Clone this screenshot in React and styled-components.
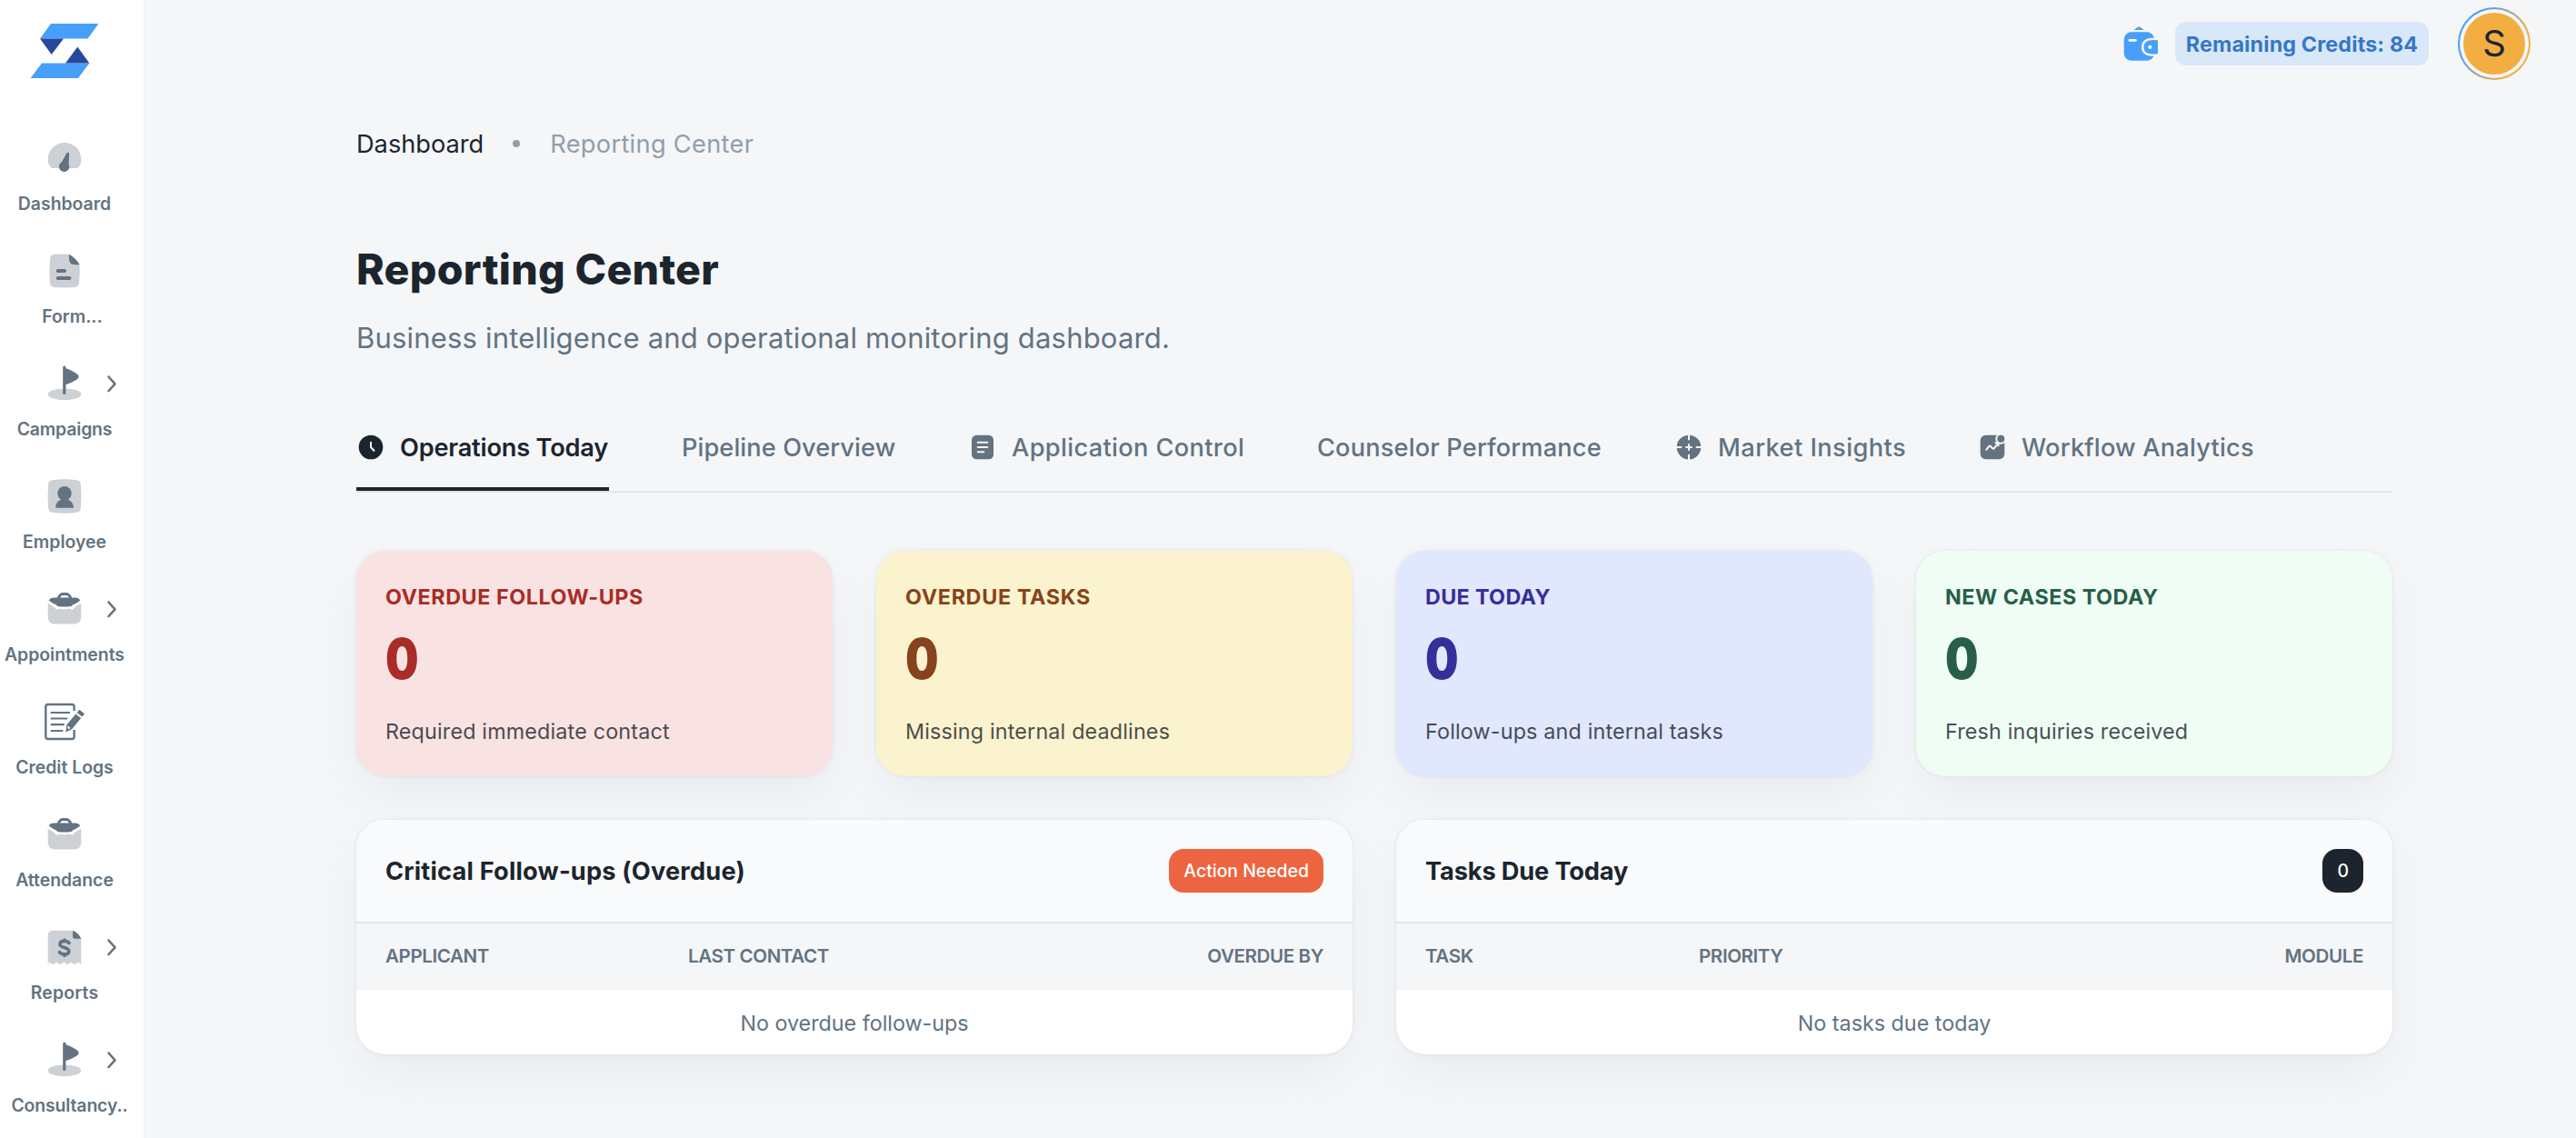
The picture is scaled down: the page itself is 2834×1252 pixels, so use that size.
import React from "react";
import styled, { createGlobalStyle } from "styled-components";

const GlobalStyle = createGlobalStyle`
  * {
    box-sizing: border-box;
  }
  body {
    margin: 0;
    background: #f4f6f8;
    color: #1c252e;
    font-family: Inter, "Open Sans", sans-serif;
    -webkit-font-smoothing: antialiased;
  }
  svg {
    display: block;
    flex: none;
  }
`;

const Page = styled.div`
  display: flex;
  height: 1252px;
  overflow: hidden;
`;

/* ---------- sidebar ---------- */

const Sidebar = styled.aside`
  flex: none;
  width: 160px;
  height: 100%;
  overflow: hidden;
  background: #fff;
  border-right: 2px solid #f1f3f5;
`;

const LogoWrap = styled.div`
  height: 132px;
  padding: 26px 0 0 33px;
`;

const Nav = styled.nav`
  width: 142px;
`;

const NavItem = styled.div`
  height: 124px;
  padding-top: 20px;
`;

const NavIconRow = styled.div`
  display: grid;
  grid-template-columns: 1fr 44px 1fr;
  align-items: center;
  height: 44px;
  > svg:last-child:not(:first-child) {
    margin-left: 14px;
  }
  > svg:first-child {
    grid-column: 2;
  }
`;

const NavLabel = styled.div`
  display: flex;
  justify-content: center;
  margin-top: 16px;
  padding-left: ${p => p.$indent || 0}px;
  white-space: nowrap;
  font-size: 19.4px;
  line-height: 24px;
  font-weight: 600;
  letter-spacing: ${p => p.$ls || 0}px;
  color: #637381;
`;

/* ---------- top bar ---------- */

const Main = styled.main`
  flex: 1;
  min-width: 0;
`;

const TopBar = styled.header`
  display: flex;
  align-items: center;
  justify-content: flex-end;
  height: 96px;
  padding-right: 50px;
`;

const Credits = styled.div`
  display: flex;
  align-items: center;
  justify-content: center;
  width: 279px;
  height: 48px;
  margin: 0 32px 0 16px;
  border-radius: 12px;
  background: #d9e8f8;
  color: #3577c8;
  font-size: 23.3px;
  font-weight: 700;
  letter-spacing: 0.15px;
  white-space: nowrap;
`;

const AvatarRing = styled.div`
  width: 80px;
  height: 80px;
  padding: 2px;
  border-radius: 50%;
  background: linear-gradient(120deg, #489ffa 22%, #f2ae40 76%);
`;

const AvatarGap = styled.div`
  width: 76px;
  height: 76px;
  padding: 4px;
  border-radius: 50%;
  background: #f4f6f8;
`;

const Avatar = styled.div`
  display: flex;
  align-items: center;
  justify-content: center;
  width: 68px;
  height: 68px;
  border-radius: 50%;
  background: #f2ae40;
  font-size: 40px;
  line-height: 68px;
`;

/* ---------- page head ---------- */

const Container = styled.div`
  width: 2240px;
  margin-left: 232px;
  padding-top: 40px;
`;

const Breadcrumbs = styled.div`
  display: flex;
  align-items: center;
  height: 44px;
  font-size: 27.2px;
`;

const Crumb = styled.span`
  color: ${p => (p.$current ? "#919eab" : "#1c252e")};
  letter-spacing: ${p => (p.$current ? 0.32 : 0)}px;
`;

const CrumbDot = styled.i`
  width: 8px;
  height: 8px;
  margin: 0 33px 0 32px;
  border-radius: 50%;
  background: #919eab;
`;

const Title = styled.h1`
  margin: 80px 0 0;
  font-size: 46.5px;
  line-height: 72px;
  font-weight: 800;
  letter-spacing: 0.3px;
`;

const Subtitle = styled.p`
  margin: 16px 0 0;
  font-size: 31px;
  line-height: 48px;
  letter-spacing: 0.19px;
  color: #637381;
`;

const Tabs = styled.div`
  display: flex;
  gap: 80px;
  margin-top: 48px;
  border-bottom: 2px solid #e1e4e7;
`;

const Tab = styled.div`
  display: flex;
  align-items: center;
  gap: 16px;
  width: ${p => p.$width}px;
  height: 96px;
  font-size: 27.2px;
  font-weight: ${p => (p.$active ? 600 : 500)};
  letter-spacing: ${p => p.$ls}px;
  white-space: nowrap;
  color: ${p => (p.$active ? "#1c252e" : "#637381")};
  box-shadow: ${p => (p.$active ? "inset 0 -4px 0 #1c252e" : "none")};
`;

/* ---------- cards ---------- */

const shadow = `
  box-shadow: 0 0 4px rgba(145, 158, 171, .2), 0 24px 48px -8px rgba(145, 158, 171, .12);
`;

const StatGrid = styled.div`
  display: grid;
  grid-template-columns: repeat(4, 1fr);
  gap: 48px;
  margin-top: 64px;
`;

const StatCard = styled.section`
  height: 248px;
  padding: 33px 32px 0;
  border-radius: 32px;
  background: ${p => p.$bg};
  color: ${p => p.$color};
  ${shadow}
`;

const StatTitle = styled.div`
  font-size: 23.3px;
  line-height: 36px;
  font-weight: 700;
  letter-spacing: ${p => p.$ls}px;
`;

const StatValue = styled.div`
  margin: 2px 0 14px;
  font-size: 62px;
  line-height: 96px;
  font-weight: 900;
  transform: scaleX(0.83);
  transform-origin: left;
`;

const StatNote = styled.div`
  font-size: 23.3px;
  line-height: 36px;
  letter-spacing: 0.18px;
  color: #1c252e;
  opacity: 0.8;
`;

const PanelGrid = styled.div`
  display: grid;
  grid-template-columns: 1fr 1fr;
  gap: 48px;
  margin-top: 48px;
`;

const Panel = styled.section`
  overflow: hidden;
  border-radius: 32px;
  background: #fff;
  ${shadow}
`;

const PanelHead = styled.div`
  display: flex;
  align-items: center;
  justify-content: space-between;
  height: 114px;
  padding: 0 32px;
  border-bottom: 2px solid #dfe6ec;
  background: #f9fafc;
`;

const PanelTitle = styled.h2`
  margin: 0;
  font-size: 27.2px;
  font-weight: 700;
  letter-spacing: ${p => p.$ls}px;
`;

const Badge = styled.span`
  height: 48px;
  padding: 0 16px;
  border-radius: 16px;
  background: ${p => p.$bg};
  color: #fff;
  font-size: 19.4px;
  line-height: 48px;
  font-weight: 500;
`;

const HeadRow = styled.div`
  display: grid;
  grid-template-columns: ${p => p.$first}px 1fr auto;
  padding: 0 32px;
  height: 73px;
  background: #f4f6f8;
  color: #637381;
  font-size: 20.6px;
  line-height: 72px;
  font-weight: 600;
  letter-spacing: -0.42px;
`;

const Empty = styled.div`
  height: 71px;
  font-size: 23.3px;
  line-height: 73px;
  text-align: center;
  color: #637381;
`;

/* ---------- icons ---------- */

const DARK = "#637381";
const LIGHT = "#cdd1d6";

const Logo = () => (
  <svg width="76" height="60" viewBox="0 0 76 60">
    <path fill="#489ffa" d="M23 0h52.5l-12 16.5H11zM13 43.5h52.3L53 60H.5z" />
    <path fill="#28489d" d="M11 16.5h26L23.7 34zM39 43.5h26.3L52.3 25.5z" />
  </svg>
);

const DashboardIcon = () => (
  <svg width="44" height="44">
    <path fill={LIGHT} d="M9 33C5.500 33 3.700 28 3.700 23.300a18.300 18.300 0 0 1 36.600 0C40.300 28 38.500 33 35 33z" />
    <path fill={DARK} d="M24.200 16.700c.6-1.400 2.900-1 2.900.6l-.5 11.200a5.700 5.700 0 1 1-7.700-2.200z" />
  </svg>
);

const FormIcon = () => (
  <svg width="44" height="44">
    <path fill={LIGHT} d="M11 3.800Q19 3 27 3.800L38.500 15.200Q39.200 26 38 35q-.5 4.500-4.500 5-11.500.8-23 0-4-.5-4.500-4.500-1.300-13.500 0-27 .5-4.200 5-4.700z" />
    <path fill={DARK} d="M27 3.800c-.3 3.500-.2 6.500 1 9 .8 2.200 3.500 2.700 10.600 2.400C36 10.500 32 6.500 27 3.800z" />
    <path stroke={DARK} strokeWidth="3.800" strokeLinecap="round" d="M14.700 22h7.400M14.700 30h12.800" />
  </svg>
);

const FlagIcon = () => (
  <svg width="44" height="44">
    <ellipse cx="22" cy="33.800" rx="18.300" ry="6.400" fill={LIGHT} />
    <path stroke={DARK} strokeWidth="3.200" strokeLinecap="round" d="M21.800 4v28.500" />
    <path fill={DARK} d="M22 4.800c5 1.500 9.500 3.700 13.500 6.400 2.800 2 2.800 4.400 0 6.300-4 2.700-8.500 4.300-13.500 6.300z" />
  </svg>
);

const EmployeeIcon = () => (
  <svg width="44" height="44">
    <path fill={LIGHT} d="M8.500 4.300q13.500-2 27 0 3.800.5 4.300 4.300 1.200 13.400 0 26.800-.5 3.800-4.300 4.300-13.500 2-27 0-3.800-.5-4.300-4.300-1.200-13.400 0-26.800.5-3.800 4.300-4.300z" />
    <circle cx="22" cy="18.700" r="7.700" fill={DARK} />
    <path fill={DARK} d="M18.500 23.500h7l.5 2.200c3.500 1.300 5.700 4.200 6 9H12c.3-4.800 2.500-7.700 6-9z" />
  </svg>
);

const CaseIcon = () => (
  <svg width="44" height="44">
    <path fill={LIGHT} d="M3.700 15.500l7.800 5c.5 1.500 1.700 2.800 3 2 .7-.5 1-1.200 1.300-1 4 .9 8.400.9 12.400 0 .3-.2.600.5 1.300 1 1.300.8 2.500-.5 3-2l7.800-5v14.800c0 5.400-2.800 8.300-8.300 8.300H12c-5.500 0-8.300-2.900-8.300-8.300z" />
    <path fill={DARK} fillRule="evenodd" d="M4.700 12.600c1.200-2 3-3 6-3h3.100C15 6 17.500 4 20.500 4h3c3 0 5.500 2 6.700 5.600h3.100c3 0 4.800 1 6 3-2.300 1.900-4.500 3.300-7 4.400h-1.500v1.400C25.500 20 18.500 20 13.200 18.400V17h-1.500c-2.500-1.100-4.700-2.500-7-4.400zM17 9.600h10c-.9-1.800-2-2.600-3.500-2.600h-3C19 7 17.900 7.800 17 9.600z" />
  </svg>
);

const LogsIcon = () => (
  <svg width="44" height="44" overflow="visible">
    <path fill="none" stroke={DARK} strokeWidth="2.400" d="M32.600 10V5.500q0-2.500-2.500-2.500H3.800Q1.300 3 1.300 5.500v33q0 2.500 2.500 2.500h26.300q2.500 0 2.500-2.500V31" />
    <path stroke={DARK} strokeWidth="2.200" d="M6.700 12h21.300M6.700 18.500h18.600M6.700 25.200h15M6.700 32h13.600" />
    <path fill={DARK} d="M38.300 8.700l5.700 4.600-2.700 3.200-5.700-4.500zM34.300 13.500l5.800 4.600-10 12.200L23.200 33.500l1.200-8.200z" />
    <path fill="#fff" d="M25.700 26.600l3 2.400-2.200 1-1.300-1z" />
  </svg>
);

const ReportIcon = () => (
  <svg width="44" height="44">
    <path fill={LIGHT} d="M9 3.700h22l9.300 9V41l-3.300-2.500-4 2.700-4-2.700-3.700 2.700-4-2.700-4 2.700-4-2.700-4 2.700-4-2.700L3.700 41V9Q3.700 4.200 9 3.700z" />
    <path fill={DARK} d="M31 3.700q6.500 2.500 9.300 9h-6.500q-2.800 0-2.800-2.800z" />
    <path fill="none" stroke={DARK} strokeWidth="3.600" strokeLinecap="round" strokeLinejoin="round" d="M27 17.600c-1-1.500-2.800-2.200-5.200-2.200-3 0-4.900 1.300-4.900 3.400 0 5 9.900 2.500 9.900 7.600 0 2.200-2 3.500-4.900 3.500-2.600 0-4.600-.9-5.400-2.400M21.900 14v1M21.900 30.500v1" />
  </svg>
);

const Chevron = () => (
  <svg width="32" height="32">
    <path fill="none" stroke={DARK} strokeWidth="2.600" strokeLinecap="round" strokeLinejoin="round" d="M12.500 8.500l7 7.800-7 7.700" />
  </svg>
);

const WalletIcon = () => (
  <svg width="44" height="44">
    <path fill="#489ffa" d="M14.500 7c2-1.500 3.500-2.700 4.600-3.200.8-.3 1.300-.3 2 0 1.200.5 2.700 1.700 4.700 3.200z" />
    <rect x="3.700" y="9.300" width="33.300" height="31.400" rx="8" fill="#489ffa" />
    <path stroke="#fff" strokeWidth="2.800" strokeLinecap="round" d="M10 18.300h6.500" />
    <path fill="#489ffa" stroke="#f4f6f8" strokeWidth="2.600" d="M43 17H33.500c-5.500 0-9.300 3.500-9.300 8.800s3.800 8.700 9.300 8.700H43z" />
    <path fill="#f4f6f8" d="M40.700 14H44v24h-3.300z" />
    <path fill="#489ffa" d="M34 18.300h5c1.200 0 1.900.8 1.900 2v11.200c0 1.200-.7 1.800-1.900 1.800h-5z" />
    <circle cx="32.300" cy="25.800" r="2.100" fill="#fff" />
  </svg>
);

const ClockIcon = () => (
  <svg width="32" height="32">
    <circle cx="16" cy="16" r="13.300" fill="#1c252e" />
    <path fill="none" stroke="#f4f6f8" strokeWidth="2" strokeLinecap="round" strokeLinejoin="round" d="M16 10.700V16l3.400 3.700" />
  </svg>
);

const NoteIcon = () => (
  <svg width="32" height="32">
    <rect x="4" y="2.700" width="24" height="26.600" rx="5.300" fill={DARK} />
    <path stroke="#f4f6f8" strokeWidth="2" strokeLinecap="round" d="M10.700 10.700h10.600M10.700 16h10.600M10.700 21.300h6.600" />
  </svg>
);

const AimIcon = () => (
  <svg width="32" height="32">
    <circle cx="16" cy="16" r="13.300" fill={DARK} />
    <path stroke="#f4f6f8" strokeWidth="2" d="M16 2v6.300M16 23.700V30M2 16h6.300M23.700 16H30M16 12.300v7.400M12.300 16h7.400" />
  </svg>
);

const ChartIcon = () => (
  <svg width="32" height="32">
    <rect x="2.700" y="2.700" width="26.600" height="26.600" rx="6" fill={DARK} />
    <circle cx="25.300" cy="6.700" r="6" fill="#f4f6f8" />
    <circle cx="25.300" cy="6.700" r="4" fill={DARK} />
    <path fill="none" stroke="#f4f6f8" strokeWidth="2" strokeLinecap="round" strokeLinejoin="round" d="M9.300 18.700l3-3.700q.8-.8 1.600 0l2.300 2.300q.8.8 1.500 0l4.600-5.600M19.500 11.300h3v3" />
  </svg>
);

/* ---------- data ---------- */

const navItems = [
  { label: "Dashboard", icon: DashboardIcon },
  { label: "Form...", icon: FormIcon, indent: 17 },
  { label: "Campaigns", icon: FlagIcon, arrow: true, ls: -0.15 },
  { label: "Employee", icon: EmployeeIcon },
  { label: "Appointments", icon: CaseIcon, arrow: true },
  { label: "Credit Logs", icon: LogsIcon },
  { label: "Attendance", icon: CaseIcon },
  { label: "Reports", icon: ReportIcon, arrow: true, ls: 0.2 },
  { label: "Consultancy..", icon: FlagIcon, arrow: true, indent: 11, ls: -0.12 },
];

const tabs = [
  { label: "Operations Today", icon: ClockIcon, width: 278, ls: -0.2 },
  { label: "Pipeline Overview", width: 235, ls: 0.09 },
  { label: "Application Control", icon: NoteIcon, width: 304, ls: 0.36 },
  { label: "Counselor Performance", width: 313, ls: 0.16 },
  { label: "Market Insights", icon: AimIcon, width: 254, ls: 0.45 },
  { label: "Workflow Analytics", icon: ChartIcon, width: 304, ls: 0.21 },
];

const stats = [
  { title: "OVERDUE FOLLOW-UPS", note: "Required immediate contact", bg: "#f9e3e2", color: "#a92c26", ls: 0.57 },
  { title: "OVERDUE TASKS", note: "Missing internal deadlines", bg: "#fbf3cd", color: "#87431d", ls: 0.69 },
  { title: "DUE TODAY", note: "Follow-ups and internal tasks", bg: "#e1e7fd", color: "#362e9b", ls: 0.35 },
  { title: "NEW CASES TODAY", note: "Fresh inquiries received", bg: "#effdf5", color: "#285f48", ls: 0.53 },
];

const panels = [
  {
    title: "Critical Follow-ups (Overdue)",
    ls: 0.2,
    badge: "Action Needed",
    badgeBg: "#ed6440",
    columns: ["APPLICANT", "LAST CONTACT", "OVERDUE BY"],
    first: 333,
    empty: "No overdue follow-ups",
  },
  {
    title: "Tasks Due Today",
    ls: -0.14,
    badge: "0",
    badgeBg: "#1c252e",
    columns: ["TASK", "PRIORITY", "MODULE"],
    first: 301,
    empty: "No tasks due today",
  },
];

export default function App() {
  return (
    <Page>
      <GlobalStyle />
      <Sidebar>
        <LogoWrap>
          <Logo />
        </LogoWrap>
        <Nav>
          {navItems.map(({ label, icon: Icon, arrow, indent, ls }) => (
            <NavItem key={label}>
              <NavIconRow>
                <Icon />
                {arrow && <Chevron />}
              </NavIconRow>
              <NavLabel $indent={indent} $ls={ls}>{label}</NavLabel>
            </NavItem>
          ))}
        </Nav>
      </Sidebar>
      <Main>
        <TopBar>
          <WalletIcon />
          <Credits>Remaining Credits: 84</Credits>
          <AvatarRing>
            <AvatarGap>
              <Avatar>S</Avatar>
            </AvatarGap>
          </AvatarRing>
        </TopBar>
        <Container>
          <Breadcrumbs>
            <Crumb>Dashboard</Crumb>
            <CrumbDot />
            <Crumb $current>Reporting Center</Crumb>
          </Breadcrumbs>
          <Title>Reporting Center</Title>
          <Subtitle>Business intelligence and operational monitoring dashboard.</Subtitle>
          <Tabs>
            {tabs.map(({ label, icon: Icon, width, ls }, i) => (
              <Tab key={label} $active={i === 0} $width={width} $ls={ls}>
                {Icon && <Icon />}
                {label}
              </Tab>
            ))}
          </Tabs>
          <StatGrid>
            {stats.map(s => (
              <StatCard key={s.title} $bg={s.bg} $color={s.color}>
                <StatTitle $ls={s.ls}>{s.title}</StatTitle>
                <StatValue>0</StatValue>
                <StatNote>{s.note}</StatNote>
              </StatCard>
            ))}
          </StatGrid>
          <PanelGrid>
            {panels.map(p => (
              <Panel key={p.title}>
                <PanelHead>
                  <PanelTitle $ls={p.ls}>{p.title}</PanelTitle>
                  <Badge $bg={p.badgeBg}>{p.badge}</Badge>
                </PanelHead>
                <HeadRow $first={p.first}>
                  {p.columns.map(c => (
                    <span key={c}>{c}</span>
                  ))}
                </HeadRow>
                <Empty>{p.empty}</Empty>
              </Panel>
            ))}
          </PanelGrid>
        </Container>
      </Main>
    </Page>
  );
}
